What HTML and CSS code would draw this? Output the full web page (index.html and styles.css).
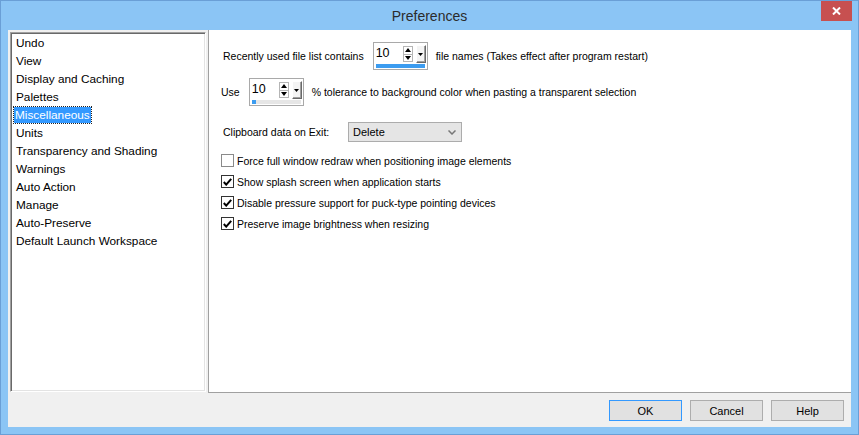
FILE: index.html
```html
<!DOCTYPE html>
<html lang="en">
<head>
    <meta charset="UTF-8">
    <title>Preferences</title>
    <link rel="stylesheet" href="styles.css">
</head>
<body>

    <div class="window">
        <div class="titlebar">
            <span class="title">Preferences</span>
            <button class="close-btn" title="Close">
                <svg width="9" height="8" viewBox="0 0 9 8"><path d="M1 0.5 L8 7.5 M8 0.5 L1 7.5" stroke="#fff" stroke-width="2"/></svg>
            </button>
        </div>

        <div class="client">
            <div class="main">
                <ul class="categories">
                    <li>Undo</li>
                    <li>View</li>
                    <li>Display and Caching</li>
                    <li>Palettes</li>
                    <li><span class="selected">Miscellaneous</span></li>
                    <li>Units</li>
                    <li>Transparency and Shading</li>
                    <li>Warnings</li>
                    <li>Auto Action</li>
                    <li>Manage</li>
                    <li>Auto-Preserve</li>
                    <li>Default Launch Workspace</li>
                </ul>

                <div class="page">
                    <div class="row row-recent">
                        <span class="label">Recently used file list contains</span>
                        <div class="spin">
                            <div class="spin-top">
                                <span class="spin-value">10</span>
                                <span class="updown">
                                    <span class="ud-half"><svg width="6" height="4" viewBox="0 0 6 4"><path d="M0 4 L3 0 L6 4 Z" fill="#000"/></svg></span>
                                    <span class="ud-half"><svg width="6" height="4" viewBox="0 0 6 4"><path d="M0 0 L3 4 L6 0 Z" fill="#000"/></svg></span>
                                </span>
                                <span class="dd-btn"><svg width="5" height="3" viewBox="0 0 5 3"><path d="M0 0 L2.5 3 L5 0 Z" fill="#000"/></svg></span>
                            </div>
                            <div class="spin-track"><div class="spin-fill" style="width: 100%"></div></div>
                        </div>
                        <span class="label">file names (Takes effect after program restart)</span>
                    </div>

                    <div class="row row-use">
                        <span class="label">Use</span>
                        <div class="spin">
                            <div class="spin-top">
                                <span class="spin-value">10</span>
                                <span class="updown">
                                    <span class="ud-half"><svg width="6" height="4" viewBox="0 0 6 4"><path d="M0 4 L3 0 L6 4 Z" fill="#000"/></svg></span>
                                    <span class="ud-half"><svg width="6" height="4" viewBox="0 0 6 4"><path d="M0 0 L3 4 L6 0 Z" fill="#000"/></svg></span>
                                </span>
                                <span class="dd-btn"><svg width="5" height="3" viewBox="0 0 5 3"><path d="M0 0 L2.5 3 L5 0 Z" fill="#000"/></svg></span>
                            </div>
                            <div class="spin-track"><div class="spin-fill" style="width: 8%"></div></div>
                        </div>
                        <span class="label">% tolerance to background color when pasting a transparent selection</span>
                    </div>

                    <div class="row row-clip">
                        <span class="label clip-label">Clipboard data on Exit:</span>
                        <div class="combo">
                            <span>Delete</span>
                            <svg width="8" height="5" viewBox="0 0 8 5"><path d="M0.5 0.5 L4 4 L7.5 0.5" fill="none" stroke="#777" stroke-width="1.5"/></svg>
                        </div>
                    </div>

                    <div class="checks">
                        <label class="check"><span class="box"></span>Force full window redraw when positioning image elements</label>
                        <label class="check"><span class="box checked"><svg width="9" height="8" viewBox="0 0 9 8"><path d="M0.8 4 L3.2 6.6 L8.2 0.8" fill="none" stroke="#000" stroke-width="2"/></svg></span>Show splash screen when application starts</label>
                        <label class="check"><span class="box checked"><svg width="9" height="8" viewBox="0 0 9 8"><path d="M0.8 4 L3.2 6.6 L8.2 0.8" fill="none" stroke="#000" stroke-width="2"/></svg></span>Disable pressure support for puck-type pointing devices</label>
                        <label class="check"><span class="box checked"><svg width="9" height="8" viewBox="0 0 9 8"><path d="M0.8 4 L3.2 6.6 L8.2 0.8" fill="none" stroke="#000" stroke-width="2"/></svg></span>Preserve image brightness when resizing</label>
                    </div>
                </div>
            </div>

            <div class="footer">
                <button class="btn btn-default">OK</button>
                <button class="btn">Cancel</button>
                <button class="btn">Help</button>
            </div>
        </div>
    </div>

</body>
</html>
```

FILE: styles.css
```css
body {
    margin: 0;
    font-family: "Liberation Sans", Arial, sans-serif;
    background-color: #8bc5f5;
}

.window {
    width: 859px;
    height: 435px;
    box-sizing: border-box;
    border: 1px solid #6a9fd6;
    background-color: #8bc5f5;
    padding: 0 7px 7px 7px;
    position: relative;
}

.titlebar {
    height: 29px;
    line-height: 29px;
    text-align: center;
}

.title {
    font-size: 14px;
    color: #2b2b2b;
}

.close-btn {
    position: absolute;
    top: 0;
    right: 6px;
    width: 31px;
    height: 20px;
    border: none;
    padding: 0;
    background-color: #c75050;
    display: flex;
    align-items: center;
    justify-content: center;
}

.client {
    height: 397px;
    background-color: #f0f0f0;
    display: flex;
    flex-direction: column;
}

.main {
    display: flex;
    height: 363px;
}

/* lista de categorias */
.categories {
    list-style: none;
    margin: 2px 2px 1px 2px;
    padding: 1px 0 0 0;
    width: 196px;
    box-sizing: border-box;
    background-color: #fff;
    border-top: 1px solid #a0a0a0;
    border-left: 1px solid #a0a0a0;
    border-right: 1px solid #fff;
    border-bottom: 1px solid #fff;
    box-shadow: inset 1px 1px 0 #696969, inset -1px -1px 0 #e3e3e3;
    font-size: 11.8px;
    color: #000;
}

.categories li {
    height: 18px;
    line-height: 18px;
    padding-left: 5px;
}

.categories .selected {
    display: inline-block;
    line-height: 16px;
    padding: 0 1px;
    margin-left: -2px;
    background-color: #3399ff;
    color: #fff;
    outline: 1px dotted #222;
}

/* panel derecho */
.page {
    flex: 1;
    background-color: #fff;
    border-left: 1px solid #a0a0a0;
    border-bottom: 1px solid #a0a0a0;
    font-size: 10.5px;
    color: #000;
}

.row {
    display: flex;
    align-items: center;
}

.row-recent {
    margin: 12px 0 0 14px;
    gap: 9px;
}

.row-use {
    margin: 8px 0 0 12px;
    gap: 9px;
}

.row-recent .spin + .label,
.row-use .spin + .label {
    margin-left: -1px;
}

.spin {
    width: 55px;
    height: 28px;
    box-sizing: border-box;
    border: 1px solid #a9a9a9;
    background-color: #fff;
    padding: 0 1px 1px 1px;
}

.spin-top {
    height: 21px;
    box-sizing: border-box;
    padding-top: 3px;
    display: flex;
    align-items: flex-start;
}

.spin-value {
    flex: 1;
    padding-left: 1px;
    font-size: 12.5px;
    line-height: 14px;
}

.updown {
    width: 10px;
    height: 16px;
    box-sizing: border-box;
    border: 1px solid #b5b5b5;
    display: flex;
    flex-direction: column;
    margin-right: 3px;
}

.ud-half {
    flex: 1;
    display: flex;
    align-items: center;
    justify-content: center;
}

.ud-half + .ud-half {
    border-top: 1px solid #b5b5b5;
}

.dd-btn {
    width: 10px;
    height: 18px;
    box-sizing: border-box;
    background-color: #f4f4f4;
    border-top: 1px solid #fff;
    border-left: 1px solid #fff;
    border-right: 1px solid #696969;
    border-bottom: 1px solid #696969;
    box-shadow: inset -1px -1px 0 #a0a0a0;
    display: flex;
    align-items: center;
    justify-content: center;
    margin-top: -1px;
}

.spin-track {
    height: 4px;
    margin: 0 1px;
    background-color: #e6e6e6;
}

.spin-fill {
    height: 100%;
    background-color: #3c9cf0;
}

.row-clip {
    margin: 16px 0 0 14px;
}

.clip-label {
    width: 125px;
}

.combo {
    width: 114px;
    height: 20px;
    box-sizing: border-box;
    border: 1px solid #acacac;
    background-color: #e5e5e5;
    display: flex;
    align-items: center;
    justify-content: space-between;
    padding: 0 5px 0 4px;
    font-size: 11px;
}

.checks {
    margin: 8px 0 0 12px;
}

.check {
    display: flex;
    align-items: center;
    height: 21px;
    gap: 3px;
}

.box {
    width: 13px;
    height: 13px;
    box-sizing: border-box;
    border: 1px solid #8a8a8a;
    background-color: #fff;
    display: flex;
    align-items: center;
    justify-content: center;
}

.box.checked {
    border-color: #333;
}

/* botones */
.footer {
    display: flex;
    justify-content: flex-end;
    gap: 8px;
    padding: 7px 7px 0 0;
}

.btn {
    width: 73px;
    height: 21px;
    border: 1px solid #adadad;
    background-color: #e1e1e1;
    font-family: "Liberation Sans", Arial, sans-serif;
    font-size: 11px;
    color: #000;
    padding: 0;
}

.btn-default {
    border-color: #3399ff;
}
```
